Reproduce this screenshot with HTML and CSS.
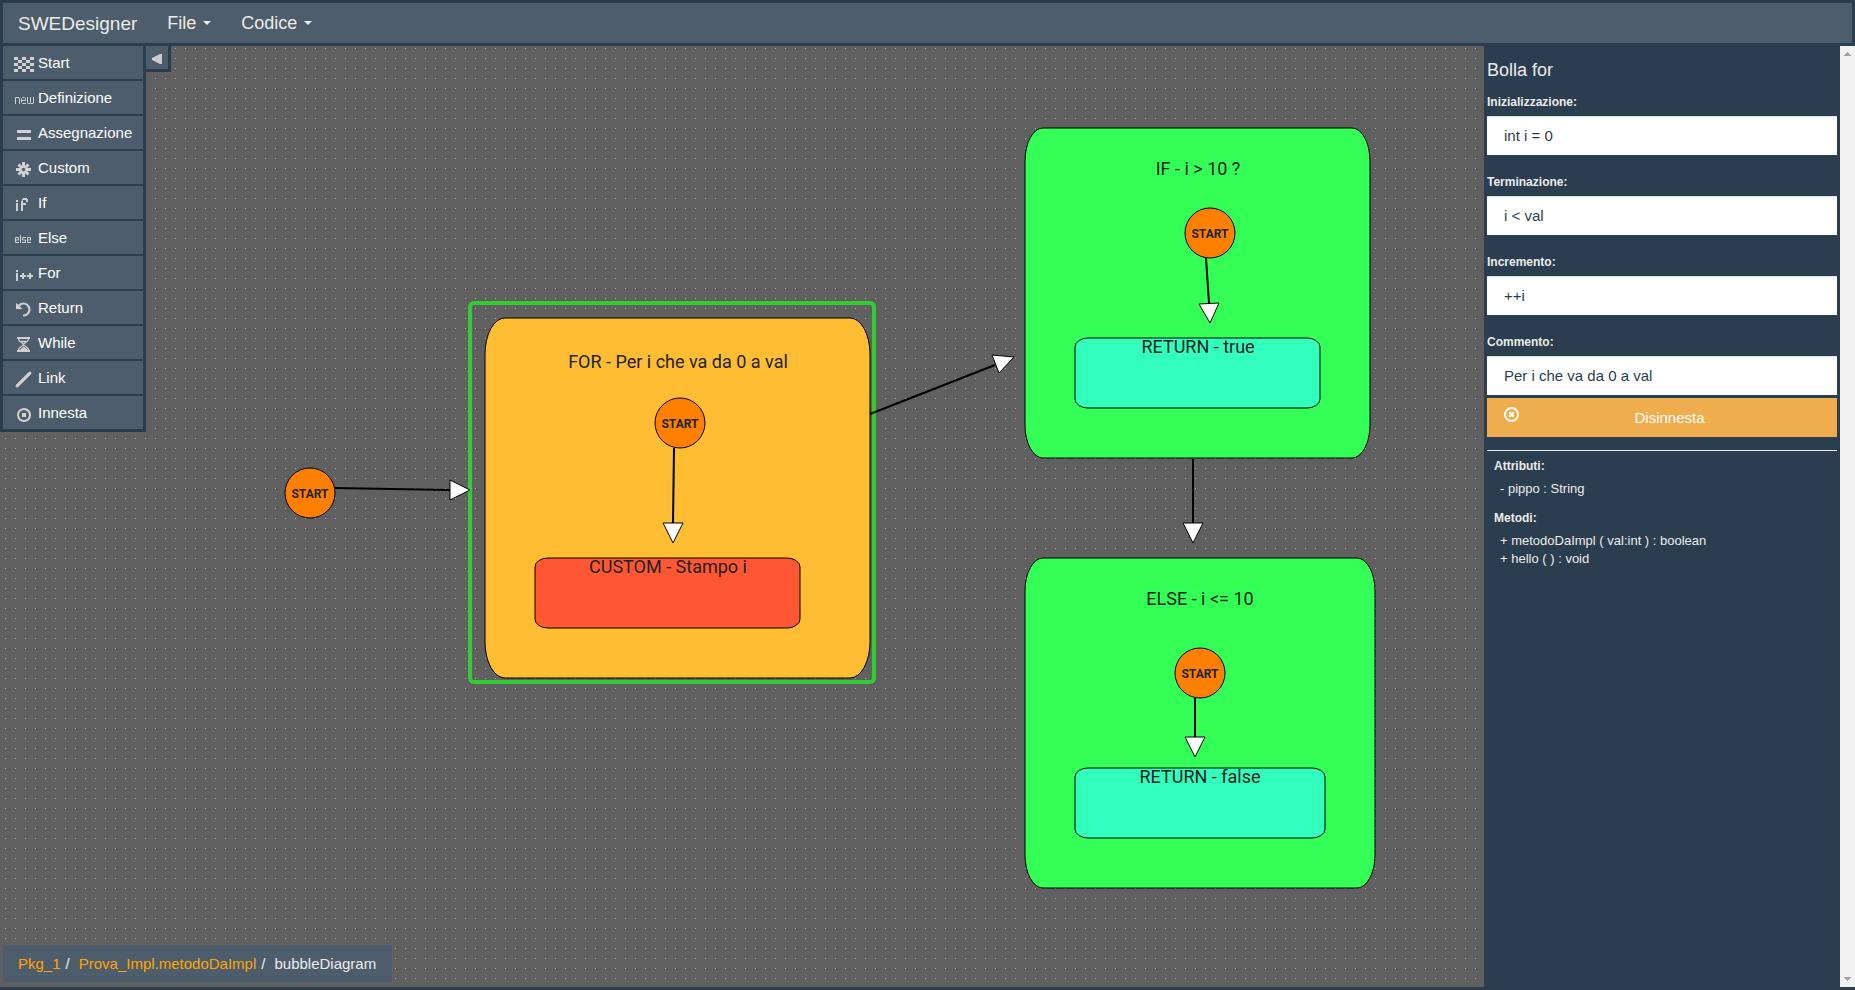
FILE: index.html
```
<!DOCTYPE html>
<html lang="it">
<head>
<meta charset="utf-8">
<title>SWEDesigner</title>
<link rel="stylesheet" href="styles.css">
</head>
<body>
<header class="navbar">
  <a class="brand" href="#">SWEDesigner</a>
  <nav class="menus">
    <button class="menu" type="button">File <span class="caret"></span></button>
    <button class="menu" type="button">Codice <span class="caret"></span></button>
  </nav>
</header>

<main class="workspace">
  <section class="canvas">
    <svg class="paper" role="img" aria-label="Diagramma delle bolle">
      <defs>
        <pattern id="grid" width="10" height="10" patternUnits="userSpaceOnUse">
          <rect width="1" height="1" fill="#aaaaaa"/>
        </pattern>
      </defs>
      <g transform="translate(5 2)">
        <rect x="-10" y="-10" width="100%" height="110%" fill="url(#grid)"/>

        <g class="shape">
          <rect x="480" y="270" width="385" height="360" rx="20" ry="36" fill="#ffbd33"/>
          <rect x="1020" y="80" width="345" height="330" rx="18" ry="33" fill="#33ff57"/>
          <rect x="1020" y="510" width="350" height="330" rx="18" ry="33" fill="#33ff57"/>
          <rect x="530" y="510" width="265" height="70" rx="13" ry="9" fill="#ff5733"/>
          <rect x="1070" y="290" width="245" height="70" rx="13" ry="9" fill="#33ffbd"/>
          <rect x="1070" y="720" width="250" height="70" rx="13" ry="9" fill="#33ffbd"/>
          <circle cx="305" cy="445" r="25" fill="#ff8000"/>
          <circle cx="675" cy="375" r="25" fill="#ff8000"/>
          <circle cx="1205" cy="185" r="25" fill="#ff8000"/>
          <circle cx="1195" cy="625" r="25" fill="#ff8000"/>
        </g>

        <g class="title">
          <text x="673" y="320">FOR - Per i che va da 0 a val</text>
          <text x="663" y="525">CUSTOM - Stampo i</text>
          <text x="1193" y="127">IF - i &gt; 10 ?</text>
          <text x="1193" y="305">RETURN - true</text>
          <text x="1195" y="557">ELSE - i &lt;= 10</text>
          <text x="1195" y="735">RETURN - false</text>
        </g>
        <g class="start">
          <text x="305" y="450">START</text>
          <text x="675" y="380">START</text>
          <text x="1205" y="190">START</text>
          <text x="1195" y="630">START</text>
        </g>

        <rect class="selection" x="465" y="255" width="404" height="379" rx="4"/>

        <g class="link">
          <path d="M330 440L446 442"/>
          <path d="M865 366L990 317"/>
          <path d="M669 400L668 476"/>
          <path d="M1201 210L1204 255"/>
          <path d="M1188 411V475"/>
          <path d="M1190 650V689"/>
        </g>
        <g class="arrow">
          <path d="M445 432L465 442L445 452Z"/>
          <path d="M987 307L1009 309L994 325Z"/>
          <path d="M658 475H678L668 495Z"/>
          <path d="M1194 256L1214 255L1205 275Z"/>
          <path d="M1178 475H1198L1188 495Z"/>
          <path d="M1180 689H1200L1190 709Z"/>
        </g>
      </g>
    </svg>

    <div class="palette">
      <div class="tools">
        <button class="tool" type="button"><svg class="icon" viewBox="0 0 20 20"><path d="M0 3h4v3H0zM8 3h4v3H8zM16 3h4v3h-4zM4 6h4v3H4zM12 6h4v3h-4zM0 9h4v3H0zM8 9h4v3H8zM16 9h4v3h-4zM4 12h4v3H4zM12 12h4v3h-4zM0 15h4v3H0zM8 15h4v3H8zM16 15h4v3h-4z"/></svg>Start</button>
        <button class="tool" type="button"><svg class="icon line" viewBox="0 0 20 20"><path d="M1.500 15V8.500H5l.500.500v6M12 14.500H8.500L7.500 13.500v-4l1-1h2l1 1v2h-4M13.500 8v6l.500.500h2l.500-.500V8M16.500 14l.500.500h2l.500-.500V8"/></svg>Definizione</button>
        <button class="tool" type="button"><svg class="icon" viewBox="0 0 20 20"><path d="M3 6h14v3H3zM3 13h14v3H3z"/></svg>Assegnazione</button>
        <button class="tool" type="button"><svg class="icon line" viewBox="0 0 20 20"><path stroke-width="3" d="M9.500 3v5M9.500 13v5M2 10.500h5M12 10.500h5M4.500 5.500l3 3M14.500 5.500l-3 3M4.500 15.500l3-3M14.500 15.500l-3-3"/><circle cx="9.500" cy="10.500" r="3" stroke-width="2.500"/></svg>Custom</button>
        <button class="tool" type="button"><svg class="icon" viewBox="0 0 20 20"><path d="M2 6h2v2H2zM2 9h2v8H2zM7 17V7h1V5h1V4h4v1h1v3h-2V6H9v3h3v2H9v6z"/></svg>If</button>
        <button class="tool" type="button"><svg class="icon line" viewBox="0 1 20 20"><path d="M5 14.500H1.500v-5h3v2.500h-3M6.500 7v8M12 9.500H8.500v2.500h3v2.500H8M17 14.500h-3.500v-5h3v2.500h-3"/></svg>Else</button>
        <button class="tool" type="button"><svg class="icon" viewBox="0 0 20 20"><path d="M2 6h2v2H2zM2 9h2v8H2zM6 11h2V9h2v2h2v2h-2v2H8v-2H6zM13 11h2V9h2v2h2v2h-2v2h-2v-2h-2z"/></svg>For</button>
        <button class="tool" type="button"><svg class="icon" viewBox="0 0 20 20"><path d="M2 4l2 1.500 1.500 1.500L8 9.500V10H2z"/><path d="M5 6.500A6 6 0 1 1 9 16.500" fill="none" stroke="#d0d0d0" stroke-width="2"/></svg>Return</button>
        <button class="tool" type="button"><svg class="icon" viewBox="0 0 20 20"><path d="M3 3h13v2H3zM3 16h13v2H3zM9.500 12.500L12 14l2 2H6z"/><path d="M4.500 5c0 3 5 4 5 5.500S4.500 13 4.500 16M14.500 5c0 3-5 4-5 5.500s5 2.500 5 5.500M7 7.500h5" fill="none" stroke="#d0d0d0" stroke-width="1.300"/></svg>While</button>
        <button class="tool" type="button"><svg class="icon" viewBox="0 0 20 20"><path d="M15 3h2v2L4 18H2v-2z" stroke="#d0d0d0" stroke-width=".500"/></svg>Link</button>
        <button class="tool" type="button"><svg class="icon" viewBox="0 0 20 20"><path fill-rule="evenodd" d="M10 4a7 7 0 1 0 .100 0zM10 6a5 5 0 1 1-.100 0zM8 9h4v4H8z"/></svg>Innesta</button>
      </div>
      <button class="toggle" type="button" aria-label="Nascondi strumenti"><svg width="10" height="10" viewBox="0 0 10 10"><path d="M10 0v10H8L0 6V4L8 0z" fill="#cccccc"/></svg></button>
    </div>

    <nav class="breadcrumb" aria-label="Percorso">
      <a href="#">Pkg_1</a><span class="slash">/</span><a href="#">Prova_Impl.metodoDaImpl</a><span class="slash">/</span><span>bubbleDiagram</span>
    </nav>
  </section>

  <aside class="details">
    <form class="form">
      <h4 class="heading">Bolla for</h4>
      <div class="fields">
        <div class="field"><label for="init">Inizializzazione:</label><input id="init" type="text" value="int i = 0"></div>
        <div class="field"><label for="term">Terminazione:</label><input id="term" type="text" value="i &lt; val"></div>
        <div class="field"><label for="incr">Incremento:</label><input id="incr" type="text" value="++i"></div>
        <div class="field"><label for="comm">Commento:</label><input id="comm" type="text" value="Per i che va da 0 a val"></div>
      </div>
      <button class="detach" type="button"><svg width="15" height="15" viewBox="0 0 15 15" fill="none" stroke="#ffffff"><circle cx="7.500" cy="7.500" r="6.500" stroke-width="2"/><path d="M5.300 5.300l4.400 4.400M9.700 5.300l-4.400 4.400" stroke-width="2.200"/></svg><span>Disinnesta</span></button>
      <div class="members">
        <h5>Attributi:</h5>
        <ul><li>- pippo : String</li></ul>
        <h5>Metodi:</h5>
        <ul><li>+ metodoDaImpl ( val:int ) : boolean</li><li>+ hello ( ) : void</li></ul>
      </div>
    </form>
    <div class="scrollbar" aria-hidden="true">
      <svg width="7" height="4" viewBox="0 0 7 4"><path d="M3 0h1v1h1v1h1v1h1v1H0V3h1V2h1V1h1z"/></svg>
      <svg width="7" height="4" viewBox="0 0 7 4"><path d="M0 0h7v1H6v1H5v1H4v1H3V3H2V2H1V1H0z"/></svg>
    </div>
  </aside>
</main>
</body>
</html>
```
FILE: styles.css
```
* { box-sizing: border-box; }

body {
  display: flex;
  flex-direction: column;
  height: 100vh;
  margin: 0;
  overflow: hidden;
  background: #2b3e50;
  color: #ebebeb;
  font-family: "Liberation Sans", Arial, sans-serif;
  font-size: 15px;
  line-height: 21px;
}

button, input { font: inherit; border: 0; border-radius: 0; }
a { text-decoration: none; }

.navbar {
  display: flex;
  align-items: center;
  gap: 15px;
  flex: none;
  height: 46px;
  padding: 0 15px;
  border: 3px solid #2b3e50;
  background: #4e5d6c;
}
.brand { color: #ebebeb; font-size: 19px; }
.menus { display: flex; }
.menu {
  display: flex;
  align-items: center;
  gap: 7px;
  padding: 0 15px;
  background: none;
  color: #ebebeb;
  font-size: 18px;
}
.caret {
  border-top: 4px solid;
  border-right: 4px solid transparent;
  border-left: 4px solid transparent;
}

.workspace {
  display: flex;
  flex: 1;
  min-height: 0;
  border-bottom: 3px solid #2b3e50;
}

.canvas {
  position: relative;
  flex: 1;
  min-width: 0;
  background: #606060;
}
.paper {
  position: absolute;
  width: 100%;
  height: 100%;
}
.shape { stroke: #000000; stroke-width: 1; }
.title { font: 18px Roboto, sans-serif; text-anchor: middle; fill: #222222; }
.start { font: bold 12px Roboto, sans-serif; text-anchor: middle; fill: #222222; }
.selection { fill: none; stroke: #33cc33; stroke-width: 4; }
.link { fill: none; stroke: #000000; stroke-width: 2; }
.arrow { fill: #ffffff; stroke: #000000; stroke-width: 1; }

.palette {
  position: absolute;
  top: 0;
  left: 0;
  display: flex;
  align-items: flex-start;
}
.tools {
  display: flex;
  flex-direction: column;
  gap: 2px;
  padding: 0 3px 3px;
  background: #2b3e50;
}
.tool {
  display: flex;
  align-items: center;
  gap: 4px;
  width: 140px;
  height: 33px;
  padding: 0 10px 0 11px;
  background: #4e5d6c;
  color: #ffffff;
}
.icon { flex: none; width: 20px; height: 20px; fill: #d0d0d0; margin-top: 3px; }
.icon.line { fill: none; stroke: #d0d0d0; }
.toggle {
  display: flex;
  padding: 8px 6px 5px;
  border-right: 3px solid #2b3e50;
  border-bottom: 3px solid #2b3e50;
  background: #4e5d6c;
}

.breadcrumb {
  position: absolute;
  bottom: 5px;
  left: 3px;
  display: flex;
  padding: 8px 16px 8px 15px;
  background: #4e5d6c;
}
.breadcrumb a { color: #ffa500; }
.slash { padding: 0 9px 0 5px; }

.details {
  display: flex;
  flex: none;
  width: 371px;
}
.form { flex: 1; padding: 12px 3px; }
.heading { margin: 0 0 11px; font-size: 18px; font-weight: 400; line-height: 24px; }
.fields {
  display: flex;
  flex-direction: column;
  gap: 18px;
  margin-bottom: 3px;
}
.field label {
  display: block;
  margin-bottom: 5px;
  font-size: 12px;
  font-weight: 700;
  line-height: 18px;
}
.field input {
  display: block;
  width: 100%;
  height: 39px;
  padding: 0 17px;
  background: #ffffff;
  box-shadow: inset 0 2px 1px -1px #dddddd;
  color: #2b3e50;
}
.detach {
  display: flex;
  width: 100%;
  height: 39px;
  padding: 9px 17px;
  background: #f0ad4e;
  color: #ffffff;
}
.detach span { flex: 1; }
.members {
  margin-top: 13px;
  padding: 6px 7px;
  border-top: 1px solid #ebebeb;
}
.members h5 { margin: 0 0 5px; font-size: 12px; line-height: 18px; }
.members ul { margin: 0 0 11px; padding: 0 6px; list-style: none; font-size: 13px; line-height: 18px; }

.scrollbar {
  display: flex;
  flex-direction: column;
  justify-content: space-between;
  align-items: center;
  width: 15px;
  padding: 6px 0;
  background: #f1f1f1;
}
.scrollbar svg { fill: #a3a3a3; }
```
